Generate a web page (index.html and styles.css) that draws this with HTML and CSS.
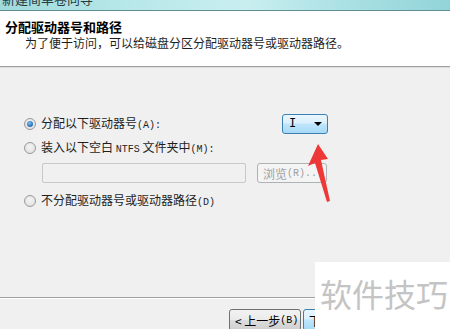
FILE: index.html
```html
<!DOCTYPE html>
<html lang="zh-CN">
  <head>
    <meta charset="UTF-8" />
    <title>分配驱动器号和路径</title>
    <link rel="stylesheet" href="styles.css">
  </head>
  <body>
    <div class="wizard">
      <div class="titlebar"><span class="caption">新建简单卷向导</span></div>

      <div class="header">
        <div class="title">分配驱动器号和路径</div>
        <div class="subtitle">为了便于访问，可以给磁盘分区分配驱动器号或驱动器路径。</div>
      </div>

      <div class="options">
        <div class="row row-letter">
          <label class="option">
            <span class="radio checked"></span>
            <span class="label">分配以下驱动器号<span class="key">(A):</span></span>
          </label>
          <div class="combo">
            <span class="combo-value">I</span>
            <span class="combo-arrow"></span>
          </div>
        </div>

        <div class="row row-folder">
          <label class="option">
            <span class="radio"></span>
            <span class="label">装入以下空白 <span class="mono">NTFS</span> 文件夹中<span class="key">(M):</span></span>
          </label>
        </div>

        <div class="row row-path">
          <div class="textbox"></div>
          <div class="button disabled">浏览<span class="key">(R)...</span></div>
        </div>

        <div class="row row-none">
          <label class="option">
            <span class="radio"></span>
            <span class="label">不分配驱动器号或驱动器路径<span class="key">(D)</span></span>
          </label>
        </div>
      </div>

      <div class="footer">
        <div class="button">&lt; 上一步<span class="key">(B)</span></div>
        <div class="button default">下一步<span class="key">(N)</span> &gt;</div>
      </div>

      <!-- red pointer drawn over the dialog -->
      <svg class="pointer" width="40" height="70" viewBox="0 0 40 70">
        <polygon points="13,0 3,22 10,19 22,58 25,57 16,16 23,15" fill="#ee3838" />
      </svg>

      <div class="watermark">软件技巧</div>
    </div>
  </body>
</html>
```

FILE: styles.css
```css
html,
body {
  margin: 0;
  padding: 0;
}

body {
  font-family: "Noto Sans CJK SC", "Liberation Sans", sans-serif;
  font-size: 12px;
  color: #1e1e1e;
  background: #f0f0f0;
}

.wizard {
  position: relative;
  width: 450px;
  height: 329px;
  overflow: hidden;
  background: #f0f0f0;
}

.titlebar {
  height: 10px;
  overflow: hidden;
  border-bottom: 1px solid #5f8e92;
  background: linear-gradient(90deg, #9fdadc 0%, #b9e8ea 30%, #c9eef0 55%, #a6dfe2 80%, #92d4d8 100%);
}

.caption {
  display: block;
  margin-top: -9px;
  padding-left: 2px;
  font-size: 13px;
  line-height: 16px;
  color: #2a3a3c;
}

.header {
  height: 55px;
  padding-left: 5px;
  background: #fff;
  border-bottom: 1px solid #a0a0a0;
  box-shadow: 0 1px 0 #dcdcdc;
}

.title {
  padding-top: 8px;
  font-size: 13px;
  font-weight: bold;
  line-height: 16px;
  color: #000;
}

.subtitle {
  padding-left: 20px;
  line-height: 15px;
}

.options {
  height: 183px;
  padding: 47px 0 0 24px;
  border-bottom: 1px solid #a0a0a0;
  box-shadow: 0 1px 0 #fff;
}

.row {
  display: flex;
  align-items: center;
}

.row-letter {
  width: 304px;
  height: 20px;
  justify-content: space-between;
}

.row-folder {
  height: 14px;
  margin-top: 7px;
}

.row-path {
  height: 20px;
  margin-top: 8px;
  padding-left: 18px;
  gap: 11px;
}

.row-none {
  height: 14px;
  margin-top: 11px;
}

.option {
  display: flex;
  align-items: center;
  gap: 5px;
}

.label {
  line-height: 14px;
}

.key,
.mono {
  font-family: "Liberation Mono", monospace;
  font-size: 10px;
}

.radio {
  width: 10px;
  height: 10px;
  border: 1px solid #9a9a9a;
  border-radius: 50%;
  background: radial-gradient(circle at 50% 40%, #f4f4f4 0%, #dcdcdc 100%);
  position: relative;
}

.radio.checked::after {
  content: "";
  position: absolute;
  left: 2px;
  top: 2px;
  width: 6px;
  height: 6px;
  border-radius: 50%;
  background: radial-gradient(circle at 40% 35%, #7fc1ee 0%, #1e6cb6 70%, #134f8c 100%);
}

.combo {
  display: flex;
  align-items: center;
  justify-content: space-between;
  box-sizing: border-box;
  width: 46px;
  height: 20px;
  padding: 0 5px 0 6px;
  border: 1px solid #3c7fb1;
  border-radius: 3px;
  background: linear-gradient(#eaf6fd 0%, #d9f0fc 45%, #bee6fd 50%, #a7d9f5 100%);
}

.combo-value {
  font-family: "Liberation Mono", monospace;
  font-size: 12px;
  color: #000;
}

.combo-arrow {
  width: 0;
  height: 0;
  border-left: 4px solid transparent;
  border-right: 4px solid transparent;
  border-top: 4px solid #000;
}

.textbox {
  box-sizing: border-box;
  width: 204px;
  height: 20px;
  border: 1px solid #c8c8c8;
  border-radius: 2px;
  background: #f0f0f0;
}

.button {
  box-sizing: border-box;
  display: flex;
  align-items: center;
  height: 20px;
  padding: 0 5px;
  border: 1px solid #707070;
  border-radius: 3px;
  background: linear-gradient(#f2f2f2 0%, #ebebeb 48%, #dddddd 52%, #cfcfcf 100%);
  color: #000;
  white-space: nowrap;
}

.button.disabled {
  width: 70px;
  border-color: #adb2b5;
  background: #f4f4f4;
  color: #a0a0a0;
}

.footer {
  display: flex;
  gap: 2px;
  padding: 11px 0 0 229px;
}

.footer .button {
  height: 22px;
}

.footer .button:first-child {
  width: 72px;
}

.button.default {
  border-color: #3c7fb1;
  background: linear-gradient(#eaf6fd 0%, #d9f0fc 45%, #bee6fd 50%, #a7d9f5 100%);
}

.pointer {
  position: absolute;
  left: 305px;
  top: 144px;
}

.watermark {
  position: absolute;
  left: 315px;
  top: 262px;
  width: 135px;
  height: 67px;
  background: #fff;
  padding-left: 5px;
  box-sizing: border-box;
  font-size: 32px;
  line-height: 62px;
  color: #c4c4c4;
}
```
